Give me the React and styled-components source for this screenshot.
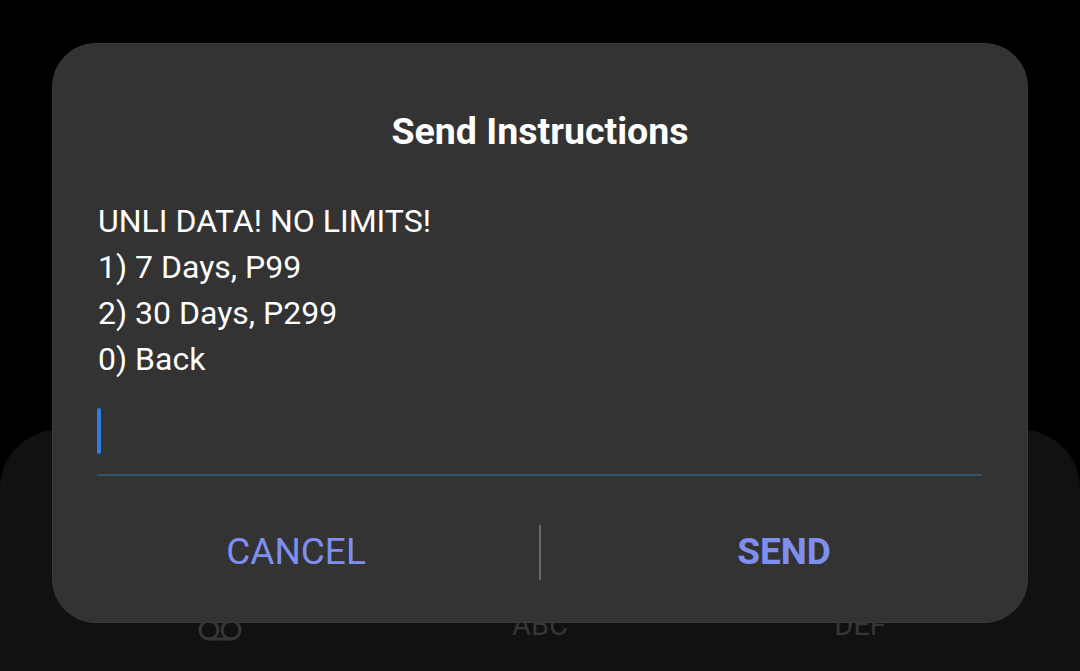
import React from "react";
import styled, { createGlobalStyle } from "styled-components";

const GlobalStyle = createGlobalStyle`
  html, body {
    margin: 0;
    padding: 0;
    background: #000;
  }
  body {
    font-family: Roboto, "Noto Sans", "Liberation Sans", sans-serif;
  }
`;

const Screen = styled.div`
  position: relative;
  width: 1080px;
  height: 671px;
  overflow: hidden;
  background: #000;
  display: flex;
  flex-direction: column;
`;

const Keypad = styled.div`
  margin-top: 430px;
  flex: 1;
  background: #111111;
  border-radius: 58px 58px 0 0;
  padding: 178px 60px 0;
  display: grid;
  grid-template-columns: repeat(3, 1fr);
  align-content: start;
`;

const Key = styled.div`
  display: flex;
  flex-direction: column;
  align-items: center;
`;

const KeyLabel = styled.div`
  height: 34px;
  font-size: 29px;
  line-height: 34px;
  color: #363636;
  display: flex;
  align-items: flex-end;
  justify-content: center;
`;

const Dialog = styled.div`
  position: absolute;
  left: 52px;
  top: 43px;
  width: 976px;
  height: 580px;
  box-sizing: border-box;
  background: #333333;
  border: 1px solid #3b3b3b;
  border-radius: 44px;
  display: flex;
  flex-direction: column;
  color: #fff;
`;

const Content = styled.div`
  padding: 65px 45px 0;
  display: flex;
  flex-direction: column;
`;

const Title = styled.div`
  font-size: 37.5px;
  line-height: 44px;
  font-weight: 700;
  text-align: center;
  color: #ffffff;
`;

const Message = styled.div`
  margin-top: 45px;
  font-size: 32px;
  line-height: 46px;
  color: #ffffff;
`;

const Line = styled.div``;

const InputField = styled.div`
  margin-top: 26px;
  margin-left: -1px;
  height: 66px;
  border-bottom: 2px solid #2b5864;
  display: flex;
  align-items: flex-start;
`;

const Caret = styled.div`
  width: 4px;
  height: 46px;
  border-radius: 2px;
  background: #2f7de1;
`;

const ButtonRow = styled.div`
  margin-top: 26px;
  height: 100px;
  display: flex;
  align-items: center;
`;

const DialogButton = styled.div`
  flex: 1;
  text-align: center;
  font-size: 37px;
  line-height: 100px;
  font-weight: ${(p) => (p.$primary ? 700 : 400)};
  color: #7e8ff0;
`;

const Divider = styled.div`
  width: 2px;
  height: 55px;
  background: #686868;
`;

const VoicemailIcon = () => (
  <svg width="46" height="24" viewBox="0 0 46 24" fill="none" stroke="#363636" strokeWidth="3">
    <circle cx="12" cy="12" r="9" />
    <circle cx="34" cy="12" r="9" />
    <line x1="12" y1="21" x2="34" y2="21" />
  </svg>
);

export default function App() {
  return (
    <>
      <GlobalStyle />
      <Screen>
        <Keypad>
          <Key>
            <KeyLabel><VoicemailIcon /></KeyLabel>
          </Key>
          <Key>
            <KeyLabel>ABC</KeyLabel>
          </Key>
          <Key>
            <KeyLabel>DEF</KeyLabel>
          </Key>
        </Keypad>
        <Dialog>
          <Content>
            <Title>Send Instructions</Title>
            <Message>
              <Line>UNLI DATA! NO LIMITS!</Line>
              <Line>1) 7 Days, P99</Line>
              <Line>2) 30 Days, P299</Line>
              <Line>0) Back</Line>
            </Message>
            <InputField>
              <Caret />
            </InputField>
          </Content>
          <ButtonRow>
            <DialogButton>CANCEL</DialogButton>
            <Divider />
            <DialogButton $primary>SEND</DialogButton>
          </ButtonRow>
        </Dialog>
      </Screen>
    </>
  );
}
